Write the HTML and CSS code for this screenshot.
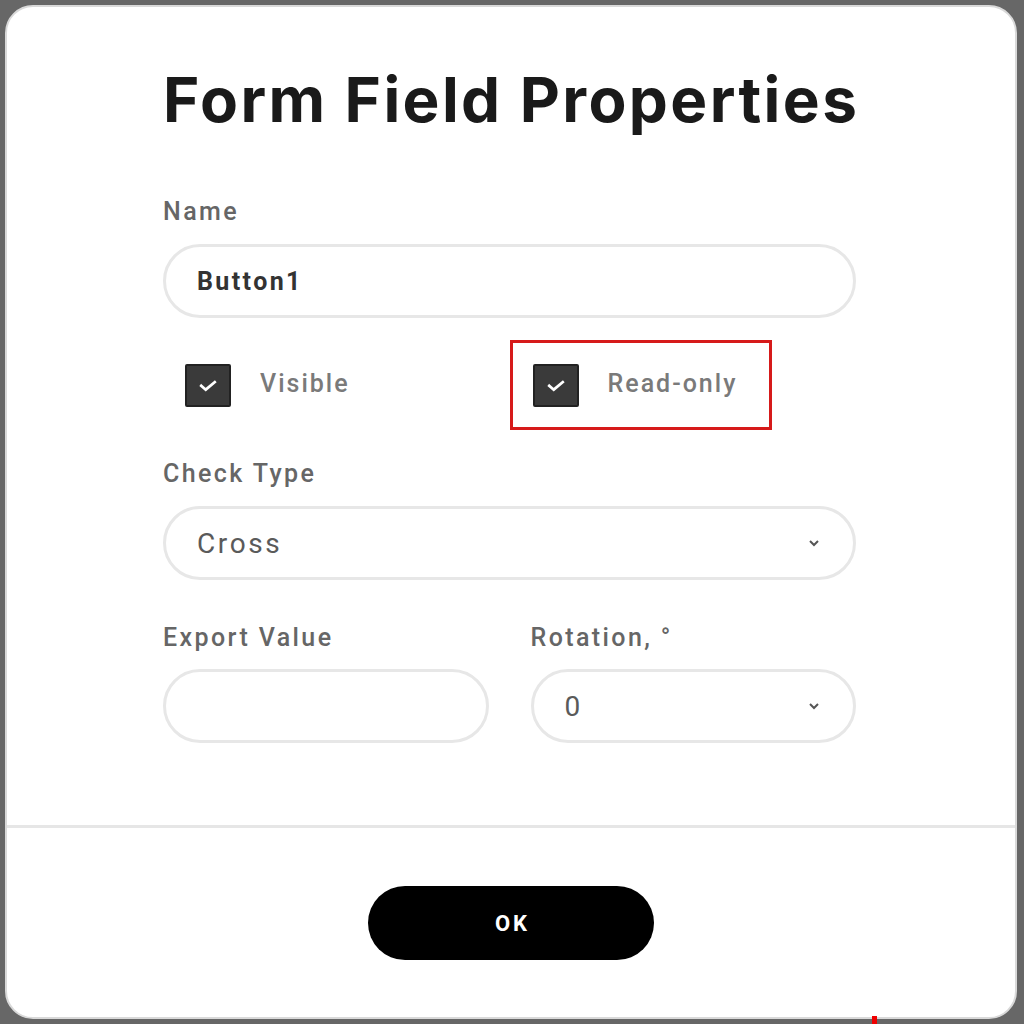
FILE: index.html
```html
<!DOCTYPE html>
<html lang="en">
<head>
<meta charset="utf-8">
<title>Form Field Properties</title>
<link rel="stylesheet" href="styles.css">
</head>
<body>
<div class="dialog">
  <div class="content">
    <h1 class="title">Form Field Properties</h1>

    <label class="label">Name</label>
    <div class="field"><span class="field-value strong">Button1</span></div>

    <div class="options">
      <div class="option">
        <span class="checkbox"><svg viewBox="0 0 16 16" width="24" height="24"><path d="M3.5 8.5l3 2.6 6-5" fill="none" stroke="#fff" stroke-width="1.8" stroke-linecap="square"/></svg></span>
        <span class="option-text">Visible</span>
      </div>
      <div class="option">
        <div class="option-inner highlighted">
          <span class="checkbox"><svg viewBox="0 0 16 16" width="24" height="24"><path d="M3.5 8.5l3 2.6 6-5" fill="none" stroke="#fff" stroke-width="1.8" stroke-linecap="square"/></svg></span>
          <span class="option-text">Read-only</span>
        </div>
      </div>
    </div>

    <label class="label label-check">Check Type</label>
    <div class="field select"><span class="field-value">Cross</span><span class="chevron"><svg viewBox="0 0 12 8" width="12" height="8"><path d="M2 2l4 4 4-4" fill="none" stroke="#555" stroke-width="2"/></svg></span></div>

    <div class="pair">
      <div class="col">
        <label class="label">Export Value</label>
        <div class="field"></div>
      </div>
      <div class="col">
        <label class="label">Rotation, °</label>
        <div class="field select"><span class="field-value">0</span><span class="chevron"><svg viewBox="0 0 12 8" width="12" height="8"><path d="M2 2l4 4 4-4" fill="none" stroke="#555" stroke-width="2"/></svg></span></div>
      </div>
    </div>
  </div>

  <div class="footer">
    <button class="ok">OK</button>
  </div>
</div>
<span class="mark"></span>
</body>
</html>
```

FILE: styles.css
```css
html, body {
  margin: 0;
  padding: 0;
}
body {
  background: #676767;
  width: 1024px;
  height: 1024px;
  box-sizing: border-box;
  padding: 5px 7px 5px 5px;
  font-family: Roboto, "Liberation Sans", Arial, sans-serif;
  position: relative;
  overflow: hidden;
}
.dialog {
  box-sizing: border-box;
  height: 1014px;
  background: #fff;
  border: 2px solid #d9d9d9;
  border-radius: 28px;
  display: flex;
  flex-direction: column;
}
.content {
  padding: 62px 159px 0 156px;
  display: flex;
  flex-direction: column;
}
.title {
  margin: 0;
  font-family: Inter, Roboto, sans-serif;
  font-weight: 700;
  font-size: 62px;
  line-height: 62px;
  color: #1a1a1a;
  letter-spacing: 2.4px;
  white-space: nowrap;
}
.label {
  display: block;
  font-size: 25px;
  line-height: 30px;
  color: #666;
  font-weight: 500;
  letter-spacing: 2.4px;
  margin-top: 66px;
  margin-bottom: 17px;
}
.label-check {
  margin-top: 29px;
}
.field {
  box-sizing: border-box;
  height: 74px;
  border: 3px solid #e7e7e7;
  border-radius: 37px;
  display: flex;
  align-items: center;
  padding: 0 33px 0 31px;
}
.field-value {
  font-size: 28px;
  letter-spacing: 2.6px;
  color: #5a5a5a;
  flex: 1;
}
.field-value.strong {
  font-size: 25px;
  font-weight: 700;
  letter-spacing: 2.4px;
  color: #333;
}
.chevron {
  display: flex;
  align-items: center;
}
.options {
  display: grid;
  grid-template-columns: 1fr 1fr;
  margin-top: 22px;
  height: 90px;
}
.option {
  display: flex;
  align-items: stretch;
}
.option-inner {
  display: flex;
  align-items: center;
}
.option > .checkbox {
  align-self: center;
  margin-left: 22px;
}
.option > .option-text {
  align-self: center;
}
.highlighted {
  border: 3px solid #d61a1a;
  padding: 0 32px 0 20px;
}
.checkbox {
  width: 46px;
  height: 43px;
  background: #3a3a3a;
  border: 2px solid #222;
  border-radius: 2px;
  box-sizing: border-box;
  display: flex;
  align-items: center;
  justify-content: center;
  margin-right: 29px;
}
.option-text {
  font-size: 25px;
  color: #7a7a7a;
  font-weight: 500;
  letter-spacing: 2px;
  position: relative;
  top: -2px;
}
.pair {
  display: grid;
  grid-template-columns: 1fr 1fr;
  column-gap: 42px;
}
.pair .label {
  margin-top: 43px;
  margin-bottom: 16px;
}
.footer {
  margin-top: auto;
  border-top: 3px solid #e6e6e6;
  height: 192px;
  box-sizing: border-box;
  display: flex;
  justify-content: center;
  padding-top: 58px;
}
.ok {
  width: 286px;
  height: 74px;
  border: none;
  border-radius: 37px;
  background: #000;
  color: #fff;
  font-family: Roboto, sans-serif;
  font-weight: 700;
  font-size: 22px;
  letter-spacing: 3px;
  padding: 0 0 0 3px;
  cursor: pointer;
}
.mark {
  position: absolute;
  left: 872px;
  top: 1016px;
  width: 5px;
  height: 8px;
  background: #e00;
}
```
